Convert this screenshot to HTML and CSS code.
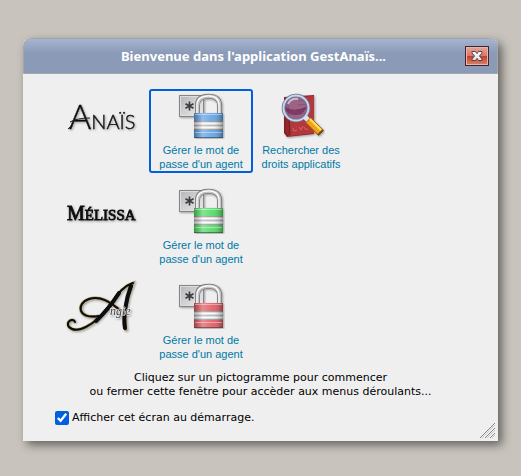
FILE: index.html
```html
<!DOCTYPE html>
<html lang="fr">
<head>
<meta charset="utf-8">
<meta name="viewport" content="width=device-width, initial-scale=1">
<title>GestAnaïs</title>
<link rel="stylesheet" href="styles.css">
</head>
<body>
<svg class="defs" aria-hidden="true">
  <defs>
    <linearGradient id="plate" x1="0" y1="0" x2="1" y2="1">
      <stop offset="0" stop-color="#b5b5b8"/><stop offset="1" stop-color="#ededee"/>
    </linearGradient>
    <linearGradient id="sheen" x1="0" y1="0" x2="1" y2="0">
      <stop offset="0" stop-color="#000" stop-opacity=".3"/><stop offset=".3" stop-color="#fff" stop-opacity=".3"/><stop offset=".65" stop-color="#fff" stop-opacity=".1"/><stop offset="1" stop-color="#000" stop-opacity=".35"/>
    </linearGradient>
    <linearGradient id="cross-fill" x1="0" y1="0" x2="0" y2="1">
      <stop offset="0" stop-color="#fff"/><stop offset="1" stop-color="#ddd"/>
    </linearGradient>
    <filter id="drop" x="-20%" y="-20%" width="150%" height="150%">
      <feDropShadow dx="1" dy="1" stdDeviation="1" flood-opacity=".35"/>
    </filter>
    <symbol id="lock" viewBox="0 0 48 48">
      <g filter="url(#drop)">
        <rect x="2.500" y="4.500" width="24" height="21" fill="url(#plate)" stroke="#858588"/>
        <rect x="3.500" y="5.500" width="22" height="19" fill="none" stroke="#ddd"/>
        <path d="M12.500 10.500v9M8.500 12.700l8 4.600M8.500 17.300l8-4.600" stroke="#3c3c3c" stroke-width="1.700"/>
        <path d="M20.500 24V14.500C20.500 8 25 5.300 31.500 5.300S42.500 8 42.500 14.500V24" fill="none" stroke="#777" stroke-width="5"/>
        <path d="M20.500 24V14.500C20.500 8 25 5.300 31.500 5.300S42.500 8 42.500 14.500V24" fill="none" stroke="#c5c5c5" stroke-width="3.400"/>
        <path d="M20 24V14.500C20 7.800 25 4.900 31.500 4.900S42 7.800 42 14.500V24" fill="none" stroke="#fff" stroke-width="1.200"/>
        <rect x="17" y="22" width="29" height="25" rx="1" fill="currentColor"/>
        <rect x="17" y="30" width="29" height="9" fill="#dadada"/>
        <path d="M17 30.500h29M17 38.500h29" stroke="#959595"/>
        <path d="M17 34.500h29" stroke="#b0b0b0"/>
        <path d="M17 32.500h29M17 36.500h29" stroke="#f8f8f8"/>
        <rect x="17" y="22" width="29" height="25" fill="url(#sheen)"/>
        <path d="M18 23.500h27M18 41.500h27" stroke="#fff" stroke-opacity=".4"/>
        <path d="M17 46.500h29" stroke="#333" stroke-opacity=".55"/>
      </g>
    </symbol>
  </defs>
</svg>

<main class="window">
  <header class="titlebar">
    <h1 class="title">Bienvenue dans l'application GestAnaïs...</h1>
    <button class="close" type="button" aria-label="Fermer">
      <svg width="12" height="12" viewBox="0 0 12 12"><path d="M1 1.500h3.500L6 3.600 7.500 1.500H11V3L8.500 6 11 9v1.500H7.500L6 8.400 4.500 10.500H1V9L3.500 6 1 3z" fill="url(#cross-fill)" stroke="#4c4656"/></svg>
    </button>
  </header>

  <div class="content">
    <div class="apps">
      <div class="logo">
        <svg width="72" height="40" viewBox="0 0 72 40" filter="url(#drop)"><text class="anais" x="4" y="29"><tspan class="anais-cap">A</tspan>NAÏS</text><path d="M3 29L6 26M5 22Q12 18 25 18" class="pen"/></svg>
      </div>
      <a class="tile tile-active blue" href="#anais"><svg width="48" height="48"><use href="#lock"/></svg><span>Gérer le mot de passe d'un agent</span></a>
      <a class="tile" href="#droits">
        <svg width="48" height="48" viewBox="0 0 48 48">
          <g filter="url(#drop)">
            <path d="M7 6L37 4L37 43L10 46L7 42z" fill="#95262b"/>
            <path d="M11 7L37 5L37 42L13 45z" fill="#b2383b"/>
            <path d="M8 7v35l3 3M11 7l2 37" fill="none" stroke="#701b22"/>
            <path d="M22 10l9-1M21 14l10-1M19 19l11-1M22 23l9-1" stroke="#64202c"/>
            <path d="M17 37q-3 1 0 3l3-1M22 36l2 3 2-4M27 36q1 4 4 2" fill="none" stroke="#d06a66"/>
            <circle cx="19" cy="17" r="12" fill="#8b86bd" fill-opacity=".55"/>
            <path d="M8 16Q18 22 30 15A12 12 0 0 1 8 18z" fill="#67194f" fill-opacity=".55"/>
            <circle cx="19" cy="17" r="12.500" fill="none" stroke="#68779a" stroke-width="3.500"/>
            <circle cx="19" cy="17" r="12.500" fill="none" stroke="#cbd5e9" stroke-width="2"/>
            <path d="M11 13Q14 7 21 8" fill="none" stroke="#dce2ff" stroke-opacity=".7" stroke-width="2"/>
            <path d="M28 26l4 4" stroke="#dfe2ea" stroke-width="5"/>
            <path d="M31 29L44 42" stroke="#a95d0c" stroke-width="8"/>
            <path d="M31.500 29.500L43.500 41.500" stroke="#f0a315" stroke-width="6"/>
            <path d="M33 28L45 40" stroke="#ffe36a" stroke-width="2"/>
            <path d="M41 44l5-5" stroke="#754618" stroke-width="2"/>
          </g>
        </svg><span>Rechercher des droits applicatifs</span>
      </a>

      <div class="logo">
        <svg width="72" height="40" viewBox="0 0 72 40" filter="url(#drop)"><text class="melissa" x="2" y="25"><tspan class="melissa-cap">M</tspan>ÉLISSA</text></svg>
      </div>
      <a class="tile green" href="#melissa"><svg width="48" height="48"><use href="#lock"/></svg><span>Gérer le mot de passe d'un agent</span></a>
      <span></span>

      <div class="logo">
        <svg class="tall" width="72" height="54" viewBox="0 0 72 54" filter="url(#drop)">
          <g class="gilt"><path d="M10 43C8 38 0 43 4 48C12 56 30 45 42 30C52 17 56 8 68 4C61 20 59 38 61 52"/><path d="M34 37C12 41 11 24 24 20C38 16 48 26 55 31"/></g>
          <g class="swash"><path d="M10 43C8 38 0 43 4 48C12 56 30 45 42 30C52 17 56 8 68 4"/><path d="M34 37C12 41 11 24 24 20C38 16 48 26 55 31"/><path class="stem" d="M31 42Q43 31 54 14M66 7C61 20 58 38 60 49"/></g>
          <text class="angie" x="45" y="36">ngie</text>
        </svg>
      </div>
      <a class="tile red" href="#angie"><svg width="48" height="48"><use href="#lock"/></svg><span>Gérer le mot de passe d'un agent</span></a>
      <span></span>
    </div>

    <p class="hint">Cliquez sur un pictogramme pour commencer<br>ou fermer cette fenêtre pour accèder aux menus déroulants...</p>
    <label class="startup"><input type="checkbox" checked>Afficher cet écran au démarrage.</label>
  </div>
  <svg class="grip" width="15" height="15" viewBox="0 0 15 15" aria-hidden="true"><path d="M0 15L15 0M5 15L15 5M10 15l5-5" stroke="#888"/><path d="M2 15L15 2M7 15l8-8M12 15l3-3" stroke="#ccc"/></svg>
</main>
</body>
</html>
```

FILE: styles.css
```css
* { box-sizing: border-box; }

body {
  margin: 0;
  padding: 38px 23px 35px;
  background: #c8c4bd;
  color: #000;
  font: 11px/14px "DejaVu Sans", Verdana, sans-serif;
}

.defs { position: absolute; width: 0; height: 0; }

.window {
  position: relative;
  background: #efefef;
  border-radius: 8px 8px 0 0;
  box-shadow: 4px 4px 10px rgba(0, 0, 0, .5);
}

.titlebar {
  display: grid;
  grid-template-columns: 10px 1fr 24px;
  align-items: center;
  height: 36px;
  padding: 0 8px;
  border: 1px solid #a6a6a8;
  border-radius: 8px 8px 0 0;
  background: linear-gradient(#a5b5d1, #8b9bb7 14px);
}

.title {
  grid-column: 2;
  margin: 0;
  color: #fff;
  font: bold 13px/16px "Noto Sans", Verdana, sans-serif;
  text-align: center;
}

.close {
  display: grid;
  place-items: center;
  width: 24px;
  height: 20px;
  padding: 0;
  border: 1px solid #3e2430;
  background: linear-gradient(#e7a49b, #d97868 48%, #c63c25 50%, #d98469);
  box-shadow: inset 0 0 0 1px #ebb4aa;
}

.content { padding: 17px 28px 16px; }

.apps {
  display: grid;
  grid-template-columns: repeat(3, 100px);
  row-gap: 15px;
}

.logo { display: flex; justify-content: center; padding-top: 9px; }
.logo svg { overflow: visible; }
.logo .tall { margin-top: -11px; }

.tile {
  display: flex;
  flex-direction: column;
  align-items: center;
  gap: 4px;
  padding: 0 6px;
  color: #0078a5;
  font: 11px/14px "Liberation Sans", Arial, sans-serif;
  text-align: center;
  text-decoration: none;
}

.tile-active { outline: 2px solid #005fdd; border-radius: 1px; }
.blue svg { color: #5e9fe5; }
.green svg { color: #4cda61; }
.red svg { color: #e15760; }

.anais { font: 300 20px Lato, sans-serif; fill: #111; stroke: #111; stroke-width: .4px; }
.anais-cap { font-size: 34px; }
.pen { fill: none; stroke: #222; }
.melissa { font: 15px "Liberation Serif", serif; fill: #111; stroke: #111; stroke-width: .8px; }
.melissa-cap { font-size: 20px; }
.angie { font: italic 12px "Liberation Serif", serif; fill: #444; stroke: #eee; stroke-width: 1px; paint-order: stroke; }
.gilt { fill: none; stroke: #aa975f; stroke-width: 3; }
.swash { fill: none; stroke: #080808; stroke-width: 2; stroke-linecap: round; }
.stem { stroke-width: 4; }

.hint { margin: 10px 0 12px; text-align: center; }

.startup { display: flex; align-items: center; gap: 3px; padding-left: 4px; width: max-content; }
.startup input { width: 14px; height: 14px; margin: 0; accent-color: #005fdd; }

.grip { position: absolute; right: 3px; bottom: 3px; }
```
